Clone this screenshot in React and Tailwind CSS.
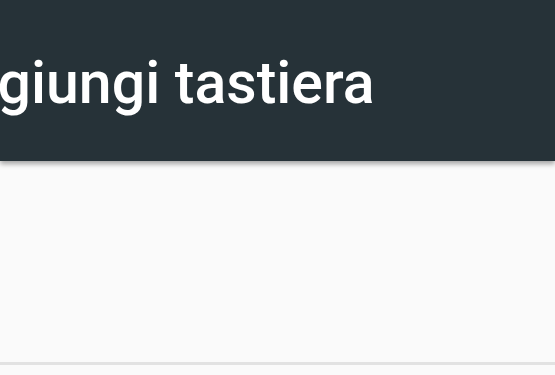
export default function App() {
  return (
    <div className="w-[555px] h-[375px] overflow-hidden bg-[#fafafa] flex flex-col" style={{ fontFamily: "Roboto, sans-serif" }}>
      <header className="relative z-10 h-[161px] shrink-0 bg-[#263238] flex items-center overflow-hidden shadow-[0_3px_5px_rgba(0,0,0,0.35)]">
        <h1 className="ml-[-75px] whitespace-nowrap text-white text-[59px] font-medium leading-none pt-[3px]">Aggiungi tastiera</h1>
      </header>
      <main className="flex-1 flex flex-col">
        <div className="h-[201px] shrink-0" />
        <div className="h-[3px] bg-[#e2e2e2]" />
      </main>
    </div>
  );
}
